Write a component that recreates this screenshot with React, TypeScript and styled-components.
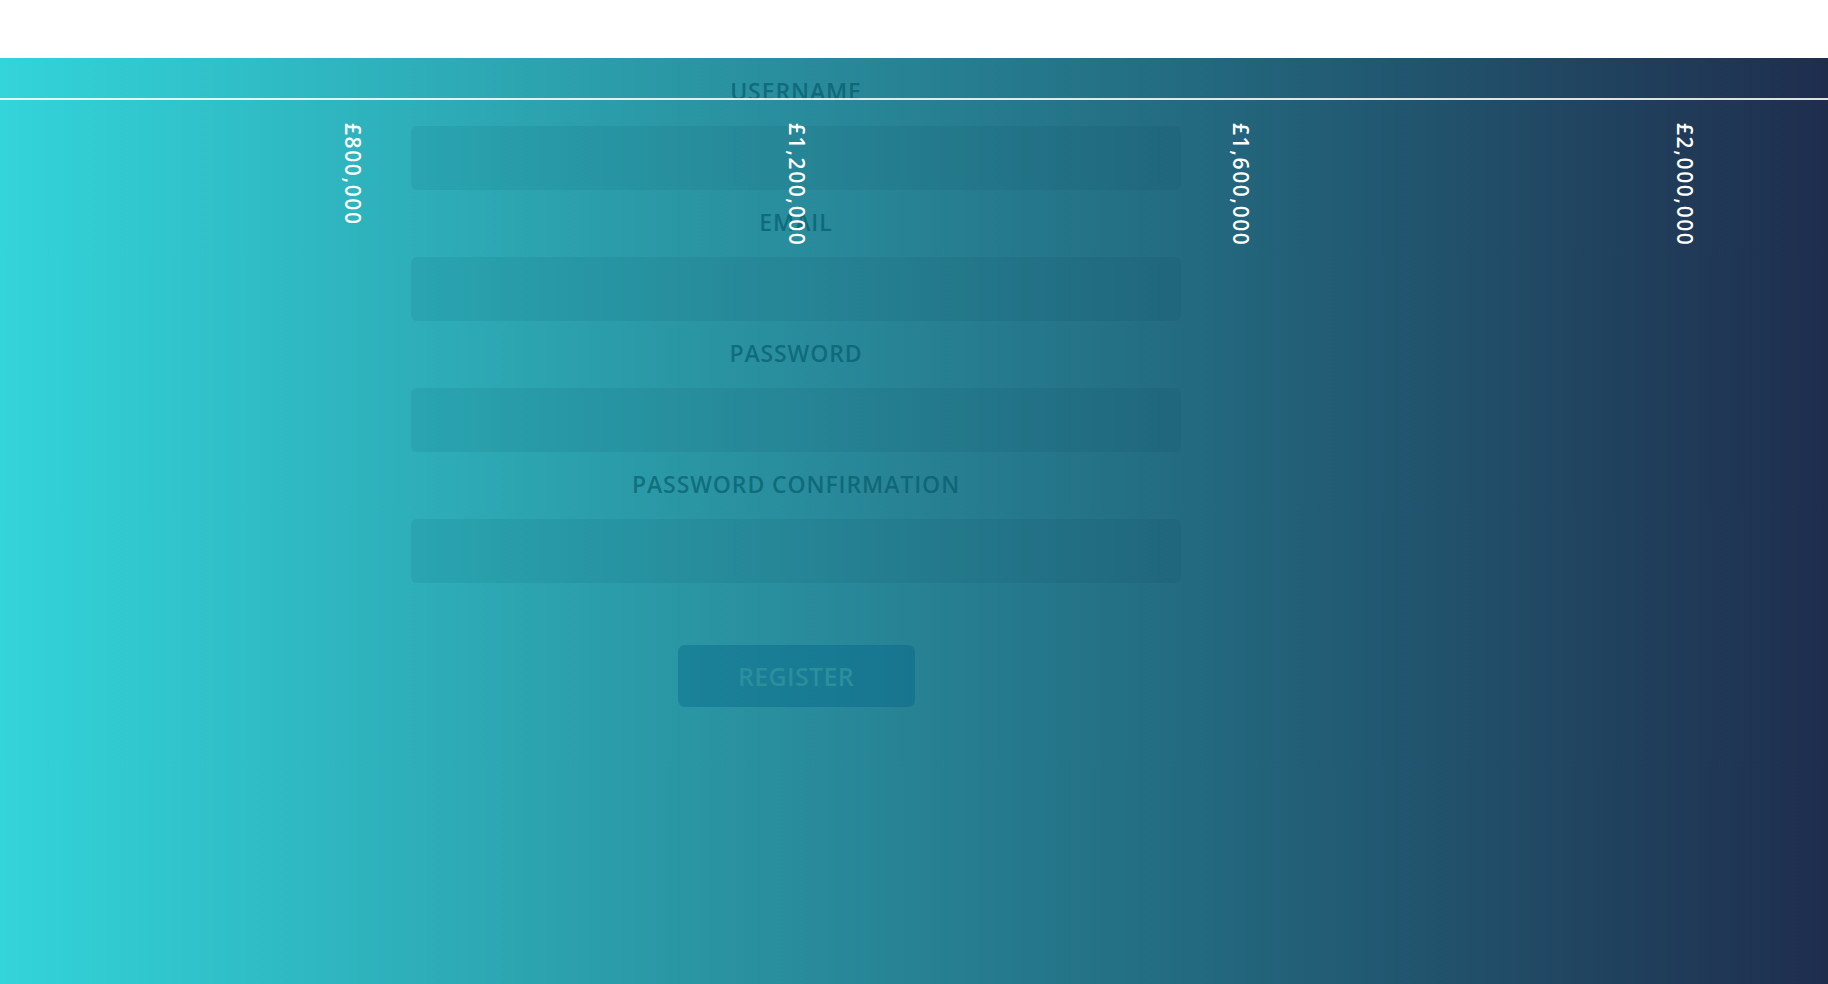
import * as React from "react";
import styled, { createGlobalStyle } from "styled-components";

const GlobalStyle = createGlobalStyle`
  html, body {
    margin: 0;
    padding: 0;
  }
  body {
    font-family: "Open Sans", "Liberation Sans", sans-serif;
    overflow: hidden;
  }
`;

const Page = styled.div`
  display: flex;
  flex-direction: column;
  width: 100%;
  height: 100vh;
`;

const TopBar = styled.header`
  height: 58px;
  flex-shrink: 0;
  background: #ffffff;
`;

const Stage = styled.main`
  position: relative;
  flex: 1;
  overflow: hidden;
  background: linear-gradient(to right, #33d4da 0%, #2a95a3 38%, #236a80 65%, #1f2d4d 100%);
  display: grid;
  grid-template-columns: 411px 770px 1fr;
  align-content: start;
`;

const Form = styled.form`
  grid-column: 2;
  display: flex;
  flex-direction: column;
  padding-top: 20px;
  gap: 19px;
`;

const Field = styled.div`
  display: flex;
  flex-direction: column;
  align-items: stretch;
`;

const Label = styled.label`
  text-align: center;
  font-size: 23px;
  line-height: 26px;
  font-weight: 600;
  letter-spacing: 0.9px;
  color: rgba(0, 85, 100, 0.62);
  margin-bottom: 22px;
`;

const Input = styled.input`
  height: 64px;
  box-sizing: border-box;
  border: none;
  border-radius: 6px;
  background: rgba(0, 40, 70, 0.07);
  outline: none;
  padding: 0 16px;
  font-family: inherit;
  font-size: 20px;
`;

const Actions = styled.div`
  display: flex;
  justify-content: center;
  padding-top: 43px;
`;

const RegisterButton = styled.button`
  width: 237px;
  height: 62px;
  border: none;
  border-radius: 7px;
  background: rgba(0, 98, 138, 0.38);
  color: #2b8f9c;
  font-family: inherit;
  font-size: 25px;
  font-weight: 600;
  letter-spacing: 0.3px;
  cursor: pointer;
`;

/* price scale drawn over the form */
const Scale = styled.div`
  position: absolute;
  left: 0;
  right: 0;
  top: 40px;
  pointer-events: none;
`;

const ScaleLine = styled.div`
  height: 2px;
  background: rgba(255, 255, 255, 0.85);
`;

const Ticks = styled.div`
  display: grid;
  grid-template-columns: repeat(4, 444px);
  padding-left: 131px;
  padding-top: 23px;
`;

const Tick = styled.span`
  justify-self: center;
  writing-mode: vertical-rl;
  color: #ffffff;
  font-size: 21px;
  font-weight: 600;
  letter-spacing: 1.6px;
  line-height: 20px;
`;

const fields = [
  { id: "username", label: "USERNAME", type: "text" },
  { id: "email", label: "EMAIL", type: "email" },
  { id: "password", label: "PASSWORD", type: "password" },
  { id: "password_confirmation", label: "PASSWORD CONFIRMATION", type: "password" },
];

const prices = ["£800,000", "£1,200,000", "£1,600,000", "£2,000,000"];

const App: React.FC = () => {
  return (
    <Page>
      <GlobalStyle />
      <TopBar />
      <Stage>
        <Form onSubmit={e => e.preventDefault()}>
          {fields.map(f => (
            <Field key={f.id}>
              <Label htmlFor={f.id}>{f.label}</Label>
              <Input id={f.id} type={f.type} />
            </Field>
          ))}
          <Actions>
            <RegisterButton type="submit">REGISTER</RegisterButton>
          </Actions>
        </Form>
        <Scale>
          <ScaleLine />
          <Ticks>
            {prices.map(p => (
              <Tick key={p}>{p}</Tick>
            ))}
          </Ticks>
        </Scale>
      </Stage>
    </Page>
  );
};

export default App;
